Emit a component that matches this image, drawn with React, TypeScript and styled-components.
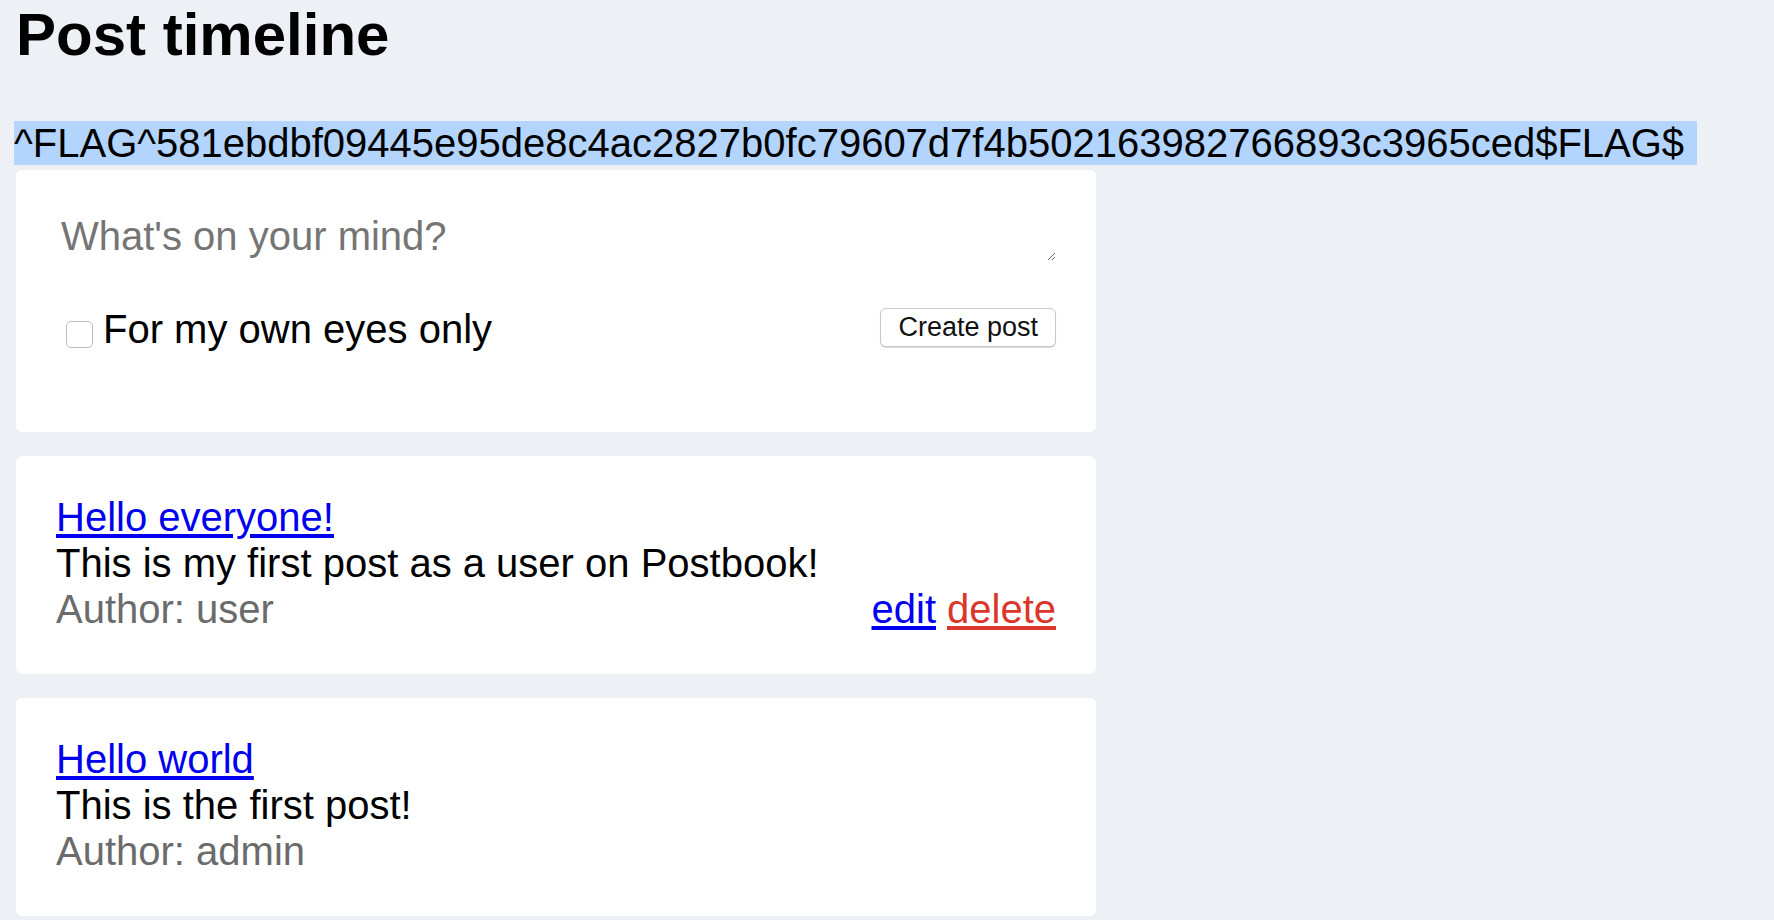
import styled, { createGlobalStyle } from "styled-components";

const GlobalStyle = createGlobalStyle`
  html, body {
    margin: 0;
    padding: 0;
    background: #edf0f5;
  }
  body {
    font-family: "Liberation Sans", Arial, sans-serif;
    color: #000;
  }
`;

type Post = {
  title: string,
  body: string,
  author: string,
  own: boolean,
}

const posts: Post[] = [
  { title: "Hello everyone!", body: "This is my first post as a user on Postbook!", author: "user", own: true },
  { title: "Hello world", body: "This is the first post!", author: "admin", own: false },
];

const Page = styled.div`
  min-height: 920px;
  padding: 0 0 0 16px;
  box-sizing: border-box;
`;

const Title = styled.h1`
  margin: 0;
  font-size: 60px;
  font-weight: 700;
  line-height: 69px;
`;

const FlagLine = styled.p`
  margin: 51px 0 4px -2px;
  font-size: 40px;
  line-height: 46px;
  span {
    background: #b3d4fc;
    padding-right: 13px;
  }
`;

const Card = styled.div`
  width: 1080px;
  box-sizing: border-box;
  background: #fff;
  border-radius: 6px;
  padding: 38px 40px 42px 40px;
  margin-bottom: 24px;
  font-size: 40px;
  line-height: 46px;
`;

const Composer = styled(Card)`
  padding: 40px 40px 40px 40px;
`;

const TextBox = styled.textarea`
  display: block;
  width: 100%;
  height: 51px;
  box-sizing: border-box;
  border: none;
  outline: none;
  padding: 3px 5px;
  font-family: inherit;
  font-size: 40px;
  line-height: 46px;
  color: #000;
  resize: vertical;
  overflow: hidden;
  &::placeholder {
    color: #757575;
  }
`;

const Row = styled.div`
  display: flex;
  align-items: center;
  justify-content: space-between;
  margin: 45px 0 40px;
  height: 46px;
`;

const CheckLabel = styled.label`
  display: flex;
  align-items: center;
  gap: 10px;
  font-size: 40px;
  line-height: 46px;
`;

const Check = styled.input`
  appearance: none;
  width: 27px;
  height: 27px;
  margin: 10px 0 0 10px;
  border: 1.5px solid #bcbcbc;
  border-radius: 5px;
  background: #fff;
  box-sizing: border-box;
`;

const Button = styled.button`
  height: 39px;
  padding: 0 17px;
  margin-top: -3px;
  background: #fff;
  border: 1px solid #c8c8c8;
  border-radius: 6px;
  box-shadow: 0 1px 1px rgba(0, 0, 0, 0.15);
  font-family: inherit;
  font-size: 27px;
  color: #111;
`;

const PostLink = styled.a<{ $danger?: boolean }>`
  color: ${(p) => (p.$danger ? "#d9372b" : "#0000ee")};
  text-decoration: underline;
  text-underline-offset: 3px;
  cursor: pointer;
`;

const Meta = styled.div`
  display: flex;
  justify-content: space-between;
  color: #6b6b6b;
`;

const Actions = styled.div`
  display: flex;
  gap: 11px;
`;

function PostCard({ post }: { post: Post }) {
  return (
    <Card>
      <div>
        <PostLink href="#">{post.title}</PostLink>
      </div>
      <div>{post.body}</div>
      <Meta>
        <span>Author: {post.author}</span>
        {post.own && (
          <Actions>
            <PostLink href="#">edit</PostLink>
            <PostLink href="#" $danger>delete</PostLink>
          </Actions>
        )}
      </Meta>
    </Card>
  );
}

export default function App() {
  return (
    <>
      <GlobalStyle />
      <Page>
        <Title>Post timeline</Title>
        <FlagLine>
          <span>^FLAG^581ebdbf09445e95de8c4ac2827b0fc79607d7f4b502163982766893c3965ced$FLAG$</span>
        </FlagLine>
        <Composer>
          <TextBox placeholder="What's on your mind?" />
          <Row>
            <CheckLabel>
              <Check type="checkbox" />
              For my own eyes only
            </CheckLabel>
            <Button>Create post</Button>
          </Row>
        </Composer>
        {posts.map((post) => (
          <PostCard key={post.title} post={post} />
        ))}
      </Page>
    </>
  );
}
